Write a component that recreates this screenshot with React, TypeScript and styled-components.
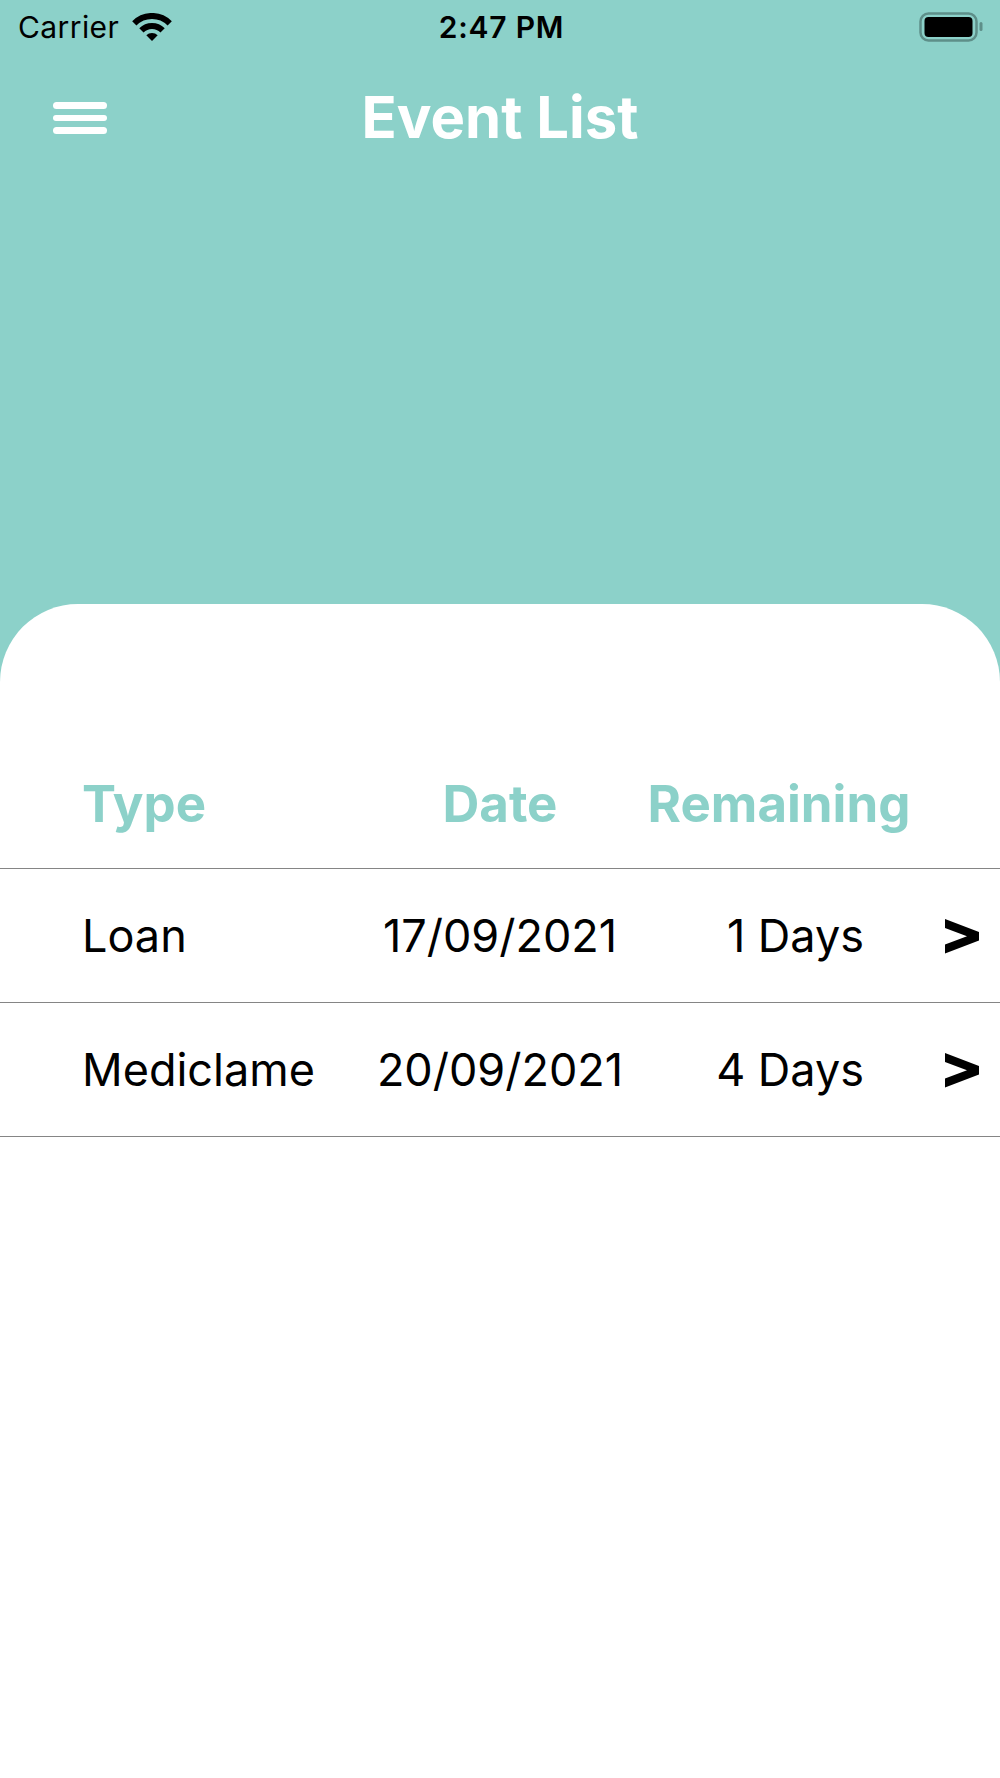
import React from "react";
import styled, { createGlobalStyle } from "styled-components";

const teal = "#8cd1c9";

const GlobalStyle = createGlobalStyle`
  html, body {
    margin: 0;
    padding: 0;
    background-color: ${teal};
  }
  * {
    box-sizing: border-box;
  }
`;

const Screen = styled.div`
  display: flex;
  flex-direction: column;
  width: 1000px;
  min-height: 1778px;
  background-color: ${teal};
  font-family: Inter, "Liberation Sans", sans-serif;
  overflow: hidden;
`;

const Top = styled.div`
  height: 604px;
  display: flex;
  flex-direction: column;
`;

const StatusBar = styled.div`
  height: 54px;
  display: grid;
  grid-template-columns: 1fr auto 1fr;
  align-items: center;
  padding: 0 15px 0 18px;
  color: #000;
`;

const Carrier = styled.div`
  display: flex;
  align-items: center;
  gap: 13px;
  font-size: 30px;
  font-weight: 400;
  letter-spacing: 0.4px;
`;

const Clock = styled.div`
  font-size: 30px;
  font-weight: 600;
  letter-spacing: 0.8px;
`;

const BatteryBox = styled.div`
  display: flex;
  justify-content: flex-end;
`;

const NavBar = styled.div`
  position: relative;
  height: 126px;
  display: flex;
  align-items: center;
  justify-content: center;
`;

const MenuButton = styled.button`
  position: absolute;
  left: 53px;
  top: 48px;
  width: 54px;
  display: flex;
  flex-direction: column;
  gap: 6px;
  padding: 0;
  border: none;
  background: none;
`;

const MenuLine = styled.span`
  display: block;
  height: 6.5px;
  border-radius: 4px;
  background-color: #fff;
`;

const Title = styled.h1`
  margin: 0;
  color: #fff;
  font-size: 58px;
  font-weight: 700;
`;

const Card = styled.div`
  flex: 1;
  background-color: #fff;
  border-radius: 78px 78px 0 0;
  padding-top: 135px;
`;

const HeaderRow = styled.div`
  display: grid;
  grid-template-columns: 260px 316px 242px;
  align-items: center;
  height: 130px;
  padding-left: 82px;
  border-bottom: 1px solid #858585;
`;

const HeaderCell = styled.div<{ $align?: string }>`
  display: flex;
  justify-content: ${(p) => (p.$align === "center" ? "center" : "flex-start")};
  white-space: nowrap;
  color: ${teal};
  font-size: 51px;
  font-weight: 700;
`;

const Row = styled.div`
  display: grid;
  grid-template-columns: 260px 316px 206px 1fr;
  align-items: center;
  height: 134px;
  padding-left: 82px;
  border-bottom: 1px solid #858585;
  color: #000;
`;

const Cell = styled.div<{ $align?: string }>`
  font-size: 45px;
  font-weight: 400;
  white-space: nowrap;
  text-align: ${(p) => p.$align || "left"};
`;

const Chevron = styled.div`
  display: flex;
  padding-left: 81px;
  padding-top: 2px;
`;

const WifiIcon = () => (
  <svg width="40" height="28" viewBox="0 0 40 28">
    <path d="M2.3 10.3 A25 25 0 0 1 37.7 10.3" fill="none" stroke="#000" strokeWidth="6" />
    <path d="M9.4 17.4 A15 15 0 0 1 30.6 17.4" fill="none" stroke="#000" strokeWidth="6" />
    <path d="M20 28 L14.3 22.3 A8 8 0 0 1 25.7 22.3 Z" fill="#000" />
  </svg>
);

const BatteryIcon = () => (
  <svg width="66" height="30" viewBox="0 0 66 30">
    <rect x="1.5" y="1.5" width="56" height="27" rx="8" fill="none" stroke="#5e8f89" strokeWidth="2.5" />
    <rect x="5.5" y="5" width="48" height="20" rx="4" fill="#000" />
    <rect x="60.5" y="10" width="3" height="9" rx="1.5" fill="#5e8f89" />
  </svg>
);

const ArrowIcon = () => (
  <svg width="34" height="35" viewBox="0 0 34 35">
    <polygon points="0,0 34,13 34,21.5 0,34.5 0,25.5 22,17.3 0,9" fill="#000" />
  </svg>
);

const events = [
  { type: "Loan", date: "17/09/2021", remaining: "1 Days" },
  { type: "Mediclame", date: "20/09/2021", remaining: "4 Days" },
];

const App: React.FC = () => {
  return (
    <Screen>
      <GlobalStyle />
      <Top>
        <StatusBar>
          <Carrier>
            Carrier
            <WifiIcon />
          </Carrier>
          <Clock>2:47 PM</Clock>
          <BatteryBox>
            <BatteryIcon />
          </BatteryBox>
        </StatusBar>
        <NavBar>
          <MenuButton aria-label="menu">
            <MenuLine />
            <MenuLine />
            <MenuLine />
          </MenuButton>
          <Title>Event List</Title>
        </NavBar>
      </Top>
      <Card>
        <HeaderRow>
          <HeaderCell>Type</HeaderCell>
          <HeaderCell $align="center">Date</HeaderCell>
          <HeaderCell $align="center">Remaining</HeaderCell>
        </HeaderRow>
        {events.map((e) => (
          <Row key={e.type}>
            <Cell>{e.type}</Cell>
            <Cell $align="center">{e.date}</Cell>
            <Cell $align="right">{e.remaining}</Cell>
            <Chevron>
              <ArrowIcon />
            </Chevron>
          </Row>
        ))}
      </Card>
    </Screen>
  );
};

export default App;
